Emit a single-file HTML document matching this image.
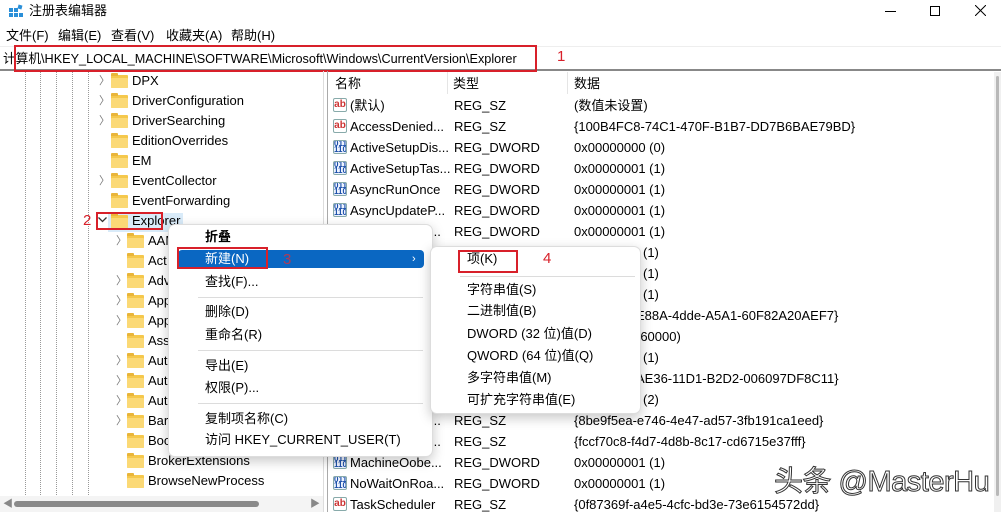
<!DOCTYPE html>
<html><head><meta charset="utf-8"><style>
*{margin:0;padding:0;box-sizing:border-box}
body{width:1001px;height:512px;overflow:hidden;background:#fff;position:relative;font-family:"Liberation Sans","Noto Sans CJK SC",sans-serif;font-size:13px;color:#000}
.a{position:absolute;white-space:nowrap;line-height:16px}
.f{position:absolute;width:17px;height:13px;background:#f5c84c;border-radius:1px}
.f:before{content:"";position:absolute;left:0;top:-2px;width:7px;height:3px;background:#e9b53a;border-radius:1px 1px 0 0}
.f:after{content:"";position:absolute;left:0;top:3px;width:17px;height:10px;background:#fbd976;border-radius:1px}
.ar{position:absolute;color:#777;font-size:11px;line-height:16px}
.vl{position:absolute;border-left:1px dotted #999;top:72px;height:423px}
.ic{position:absolute;width:14px;height:14px;border:1px solid #8aa;border-radius:2px;font-size:8px;line-height:6px;text-align:center;font-weight:bold;overflow:hidden}
.sz{color:#c33;background:#fff;font-size:10px;line-height:12px}
.dw{color:#1b4fa8;background:#eef3ff}
.red{position:absolute;border:2px solid #d8202a}
.rn{position:absolute;color:#d8202a;font-size:15px}
.menu{position:absolute;background:#fff;border:1px solid #ddd;border-radius:7px;box-shadow:0 4px 12px rgba(0,0,0,.22)}
.sep{position:absolute;height:1px;background:#dcdcdc}
</style></head><body>
<div class="a" style="left:8px;top:4px;width:16px;height:16px">
<svg width="16" height="16"><rect x="1" y="4" width="4" height="4" fill="#2a8fd8"/><rect x="6" y="4" width="4" height="4" fill="#2a8fd8"/><rect x="1" y="9" width="4" height="4" fill="#2a8fd8"/><rect x="6" y="9" width="4" height="4" fill="#2a8fd8"/><rect x="11" y="9" width="4" height="4" fill="#2a8fd8"/><rect x="10" y="1" width="4" height="4" fill="#2a8fd8" transform="rotate(15 12 3)"/></svg></div>
<div class="a" style="left:29px;top:3px;font-size:13px">注册表编辑器</div>
<div class="a" style="left:885px;top:11px;width:11px;border-top:1px solid #000"></div>
<div class="a" style="left:930px;top:6px;width:10px;height:10px;border:1px solid #000"></div>
<svg class="a" style="left:975px;top:5px" width="11" height="11"><path d="M0 0L11 11M11 0L0 11" stroke="#000" stroke-width="1"/></svg>
<div class="a" style="left:6px;top:28px">文件(F)</div>
<div class="a" style="left:58px;top:28px">编辑(E)</div>
<div class="a" style="left:111px;top:28px">查看(V)</div>
<div class="a" style="left:166px;top:28px">收藏夹(A)</div>
<div class="a" style="left:231px;top:28px">帮助(H)</div>
<div class="a" style="left:0;top:46px;width:1001px;height:1px;background:#eee"></div>
<div class="a" style="left:3px;top:51px;font-size:13px;transform:scaleX(0.975);transform-origin:0 0">计算机\HKEY_LOCAL_MACHINE\SOFTWARE\Microsoft\Windows\CurrentVersion\Explorer</div>
<div class="a" style="left:0;top:69px;width:1001px;height:2px;background:#888"></div>
<div class="red" style="left:14px;top:45px;width:523px;height:27px"></div>
<div class="rn" style="left:557px;top:48px">1</div>
<div class="vl" style="left:25px"></div><div class="vl" style="left:40px"></div><div class="vl" style="left:56px"></div><div class="vl" style="left:72px"></div><div class="vl" style="left:88px"></div>
<div class="a" style="left:323px;top:71px;width:1px;height:441px;background:#ddd"></div>
<div class="a" style="left:327px;top:71px;width:1px;height:441px;background:#aaa"></div>
<div class="ar" style="left:99px;top:73px">〉</div><div class="f" style="left:111px;top:75px"></div><div class="a" style="left:132px;top:73px">DPX</div>
<div class="ar" style="left:99px;top:93px">〉</div><div class="f" style="left:111px;top:95px"></div><div class="a" style="left:132px;top:93px">DriverConfiguration</div>
<div class="ar" style="left:99px;top:113px">〉</div><div class="f" style="left:111px;top:115px"></div><div class="a" style="left:132px;top:113px">DriverSearching</div>
<div class="f" style="left:111px;top:135px"></div><div class="a" style="left:132px;top:133px">EditionOverrides</div>
<div class="f" style="left:111px;top:155px"></div><div class="a" style="left:132px;top:153px">EM</div>
<div class="ar" style="left:99px;top:173px">〉</div><div class="f" style="left:111px;top:175px"></div><div class="a" style="left:132px;top:173px">EventCollector</div>
<div class="f" style="left:111px;top:195px"></div><div class="a" style="left:132px;top:193px">EventForwarding</div>
<div class="a" style="left:108px;top:213px;width:75px;height:19px;background:#d9ebf9"></div>
<svg class="a" style="left:98px;top:217px" width="9" height="6"><path d="M0.5 0.5L4.5 4.5L8.5 0.5" fill="none" stroke="#333" stroke-width="1.3"/></svg>
<div class="f" style="left:111px;top:215px"></div><div class="a" style="left:132px;top:213px">Explorer</div>
<div class="red" style="left:96px;top:212px;width:67px;height:18px"></div>
<div class="rn" style="left:83px;top:212px">2</div>
<div class="ar" style="left:116px;top:233px">〉</div><div class="f" style="left:127px;top:235px"></div><div class="a" style="left:148px;top:233px">AAM</div>
<div class="f" style="left:127px;top:255px"></div><div class="a" style="left:148px;top:253px">Act</div>
<div class="ar" style="left:116px;top:273px">〉</div><div class="f" style="left:127px;top:275px"></div><div class="a" style="left:148px;top:273px">Adv</div>
<div class="ar" style="left:116px;top:293px">〉</div><div class="f" style="left:127px;top:295px"></div><div class="a" style="left:148px;top:293px">App</div>
<div class="ar" style="left:116px;top:313px">〉</div><div class="f" style="left:127px;top:315px"></div><div class="a" style="left:148px;top:313px">App</div>
<div class="f" style="left:127px;top:335px"></div><div class="a" style="left:148px;top:333px">Ass</div>
<div class="ar" style="left:116px;top:353px">〉</div><div class="f" style="left:127px;top:355px"></div><div class="a" style="left:148px;top:353px">Aut</div>
<div class="ar" style="left:116px;top:373px">〉</div><div class="f" style="left:127px;top:375px"></div><div class="a" style="left:148px;top:373px">Aut</div>
<div class="ar" style="left:116px;top:393px">〉</div><div class="f" style="left:127px;top:395px"></div><div class="a" style="left:148px;top:393px">Aut</div>
<div class="ar" style="left:116px;top:413px">〉</div><div class="f" style="left:127px;top:415px"></div><div class="a" style="left:148px;top:413px">Bar</div>
<div class="f" style="left:127px;top:435px"></div><div class="a" style="left:148px;top:433px">Boo</div>
<div class="f" style="left:127px;top:455px"></div><div class="a" style="left:148px;top:453px">BrokerExtensions</div>
<div class="f" style="left:127px;top:475px"></div><div class="a" style="left:148px;top:473px">BrowseNewProcess</div>
<div class="a" style="left:0;top:496px;width:323px;height:16px;background:#f4f4f4"></div>
<div class="a" style="left:14px;top:501px;width:245px;height:6px;background:#8a8a8a;border-radius:3px"></div>
<div class="a" style="left:3px;top:497px;color:#888;font-size:10px">◀</div>
<div class="a" style="left:310px;top:497px;color:#888;font-size:10px">▶</div>
<div class="a" style="left:335px;top:76px">名称</div>
<div class="a" style="left:453px;top:76px">类型</div>
<div class="a" style="left:574px;top:76px">数据</div>
<div class="a" style="left:447px;top:72px;width:1px;height:22px;background:#e5e5e5"></div>
<div class="a" style="left:567px;top:72px;width:1px;height:22px;background:#e5e5e5"></div>
<div class="a" style="left:994px;top:72px;width:7px;height:440px;background:#f0f0f0"></div>
<div class="a" style="left:996px;top:76px;width:3px;height:420px;background:#b8b8b8;border-radius:2px"></div>
<div class="ic sz" style="left:333px;top:98px">ab</div><div class="a" style="left:350px;top:98px">(默认)</div><div class="a" style="left:454px;top:98px">REG_SZ</div><div class="a" style="left:574px;top:98px">(数值未设置)</div>
<div class="ic sz" style="left:333px;top:119px">ab</div><div class="a" style="left:350px;top:119px">AccessDenied...</div><div class="a" style="left:454px;top:119px">REG_SZ</div><div class="a" style="left:574px;top:119px">{100B4FC8-74C1-470F-B1B7-DD7B6BAE79BD}</div>
<div class="ic dw" style="left:333px;top:140px">011<br>110</div><div class="a" style="left:350px;top:140px">ActiveSetupDis...</div><div class="a" style="left:454px;top:140px">REG_DWORD</div><div class="a" style="left:574px;top:140px">0x00000000 (0)</div>
<div class="ic dw" style="left:333px;top:161px">011<br>110</div><div class="a" style="left:350px;top:161px">ActiveSetupTas...</div><div class="a" style="left:454px;top:161px">REG_DWORD</div><div class="a" style="left:574px;top:161px">0x00000001 (1)</div>
<div class="ic dw" style="left:333px;top:182px">011<br>110</div><div class="a" style="left:350px;top:182px">AsyncRunOnce</div><div class="a" style="left:454px;top:182px">REG_DWORD</div><div class="a" style="left:574px;top:182px">0x00000001 (1)</div>
<div class="ic dw" style="left:333px;top:203px">011<br>110</div><div class="a" style="left:350px;top:203px">AsyncUpdateP...</div><div class="a" style="left:454px;top:203px">REG_DWORD</div><div class="a" style="left:574px;top:203px">0x00000001 (1)</div>
<div class="a" style="left:430px;top:224px">...</div><div class="a" style="left:454px;top:224px">REG_DWORD</div><div class="a" style="left:574px;top:224px">0x00000001 (1)</div>
<div class="a" style="left:643px;top:245px">(1)</div>
<div class="a" style="left:643px;top:266px">(1)</div>
<div class="a" style="left:643px;top:287px">(1)</div>
<div class="a" style="left:636px;top:308px">E88A-4dde-A5A1-60F82A20AEF7}</div>
<div class="a" style="left:636px;top:329px">(60000)</div>
<div class="a" style="left:643px;top:350px">(1)</div>
<div class="a" style="left:636px;top:371px">AE36-11D1-B2D2-006097DF8C11}</div>
<div class="a" style="left:643px;top:392px">(2)</div>
<div class="a" style="left:430px;top:413px">...</div><div class="a" style="left:454px;top:413px">REG_SZ</div><div class="a" style="left:574px;top:413px">{8be9f5ea-e746-4e47-ad57-3fb191ca1eed}</div>
<div class="a" style="left:430px;top:434px">...</div><div class="a" style="left:454px;top:434px">REG_SZ</div><div class="a" style="left:574px;top:434px">{fccf70c8-f4d7-4d8b-8c17-cd6715e37fff}</div>
<div class="ic dw" style="left:333px;top:455px">011<br>110</div><div class="a" style="left:350px;top:455px">MachineOobe...</div><div class="a" style="left:454px;top:455px">REG_DWORD</div><div class="a" style="left:574px;top:455px">0x00000001 (1)</div>
<div class="ic dw" style="left:333px;top:476px">011<br>110</div><div class="a" style="left:350px;top:476px">NoWaitOnRoa...</div><div class="a" style="left:454px;top:476px">REG_DWORD</div><div class="a" style="left:574px;top:476px">0x00000001 (1)</div>
<div class="ic sz" style="left:333px;top:497px">ab</div><div class="a" style="left:350px;top:497px">TaskScheduler</div><div class="a" style="left:454px;top:497px">REG_SZ</div><div class="a" style="left:574px;top:497px">{0f87369f-a4e5-4cfc-bd3e-73e6154572dd}</div>
<div class="a" style="left:774px;top:465px;font-size:29px;line-height:34px;color:#fff;-webkit-text-stroke:1px #333;letter-spacing:-0.5px">头条 @MasterHu</div>
<div class="menu" style="left:168px;top:224px;width:265px;height:233px"></div>
<div class="a" style="left:205px;top:229px;font-weight:bold">折叠</div>
<div class="a" style="left:178px;top:250px;width:246px;height:18px;background:#0a67c2;border-radius:4px"></div>
<div class="a" style="left:205px;top:251px;color:#fff">新建(N)</div>
<div class="a" style="left:412px;top:251px;color:#fff;font-size:11px">›</div>
<div class="red" style="left:177px;top:247px;width:91px;height:22px"></div>
<div class="rn" style="left:283px;top:251px;color:#b03a55">3</div>
<div class="a" style="left:205px;top:274px">查找(F)...</div>
<div class="sep" style="left:198px;top:297px;width:225px"></div>
<div class="a" style="left:205px;top:304px">删除(D)</div>
<div class="a" style="left:205px;top:327px">重命名(R)</div>
<div class="sep" style="left:198px;top:350px;width:225px"></div>
<div class="a" style="left:205px;top:358px">导出(E)</div>
<div class="a" style="left:205px;top:380px">权限(P)...</div>
<div class="sep" style="left:198px;top:403px;width:225px"></div>
<div class="a" style="left:205px;top:411px">复制项名称(C)</div>
<div class="a" style="left:205px;top:432px">访问 HKEY_CURRENT_USER(T)</div>
<div class="menu" style="left:430px;top:246px;width:211px;height:168px"></div>
<div class="a" style="left:467px;top:251px">项(K)</div>
<div class="red" style="left:458px;top:250px;width:60px;height:23px"></div>
<div class="rn" style="left:543px;top:250px">4</div>
<div class="sep" style="left:460px;top:276px;width:175px"></div>
<div class="a" style="left:467px;top:282px">字符串值(S)</div>
<div class="a" style="left:467px;top:303px">二进制值(B)</div>
<div class="a" style="left:467px;top:326px">DWORD (32 位)值(D)</div>
<div class="a" style="left:467px;top:348px">QWORD (64 位)值(Q)</div>
<div class="a" style="left:467px;top:370px">多字符串值(M)</div>
<div class="a" style="left:467px;top:392px">可扩充字符串值(E)</div>
</body></html>
